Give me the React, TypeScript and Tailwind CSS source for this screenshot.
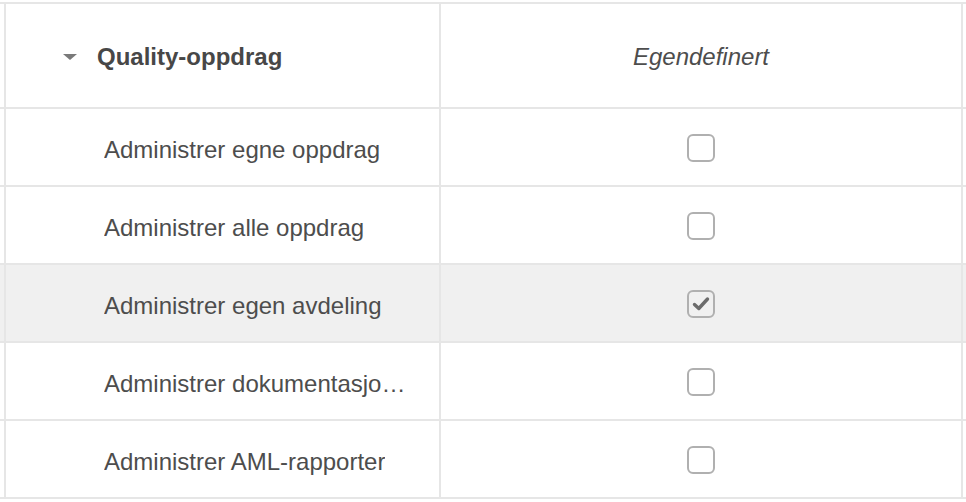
import React from "react";

interface PermissionRow {
  label: string;
  checked: boolean;
  highlighted?: boolean;
}

const rows: PermissionRow[] = [
  { label: "Administrer egne oppdrag", checked: false },
  { label: "Administrer alle oppdrag", checked: false },
  { label: "Administrer egen avdeling", checked: true, highlighted: true },
  { label: "Administrer dokumentasjonskrav", checked: false },
  { label: "Administrer AML-rapporter", checked: false },
];

const Checkbox: React.FC<{ checked: boolean }> = ({ checked }) => (
  <span className="flex h-[28px] w-[28px] items-center justify-center rounded-[6px] border-2 border-[#b0b0b0]">
    {checked && (
      <svg width="18" height="16" viewBox="0 0 18 16" fill="none">
        <path
          d="M2.5 8.5 L6.8 12.5 L15.5 3"
          stroke="#6b6b6b"
          strokeWidth="3.4"
          strokeLinecap="round"
          strokeLinejoin="round"
        />
      </svg>
    )}
  </span>
);

export default function App() {
  return (
    <div
      className="h-[502px] w-[966px] overflow-hidden bg-white pt-[2px] text-[#4d4d4d]"
      style={{ fontFamily: '"Liberation Sans", Arial, sans-serif' }}
    >
      {/* group header */}
      <div className="flex h-[107px] border-y-2 border-[#e6e6e6]">
        <div className="ml-[4px] flex w-[437px] items-center border-x-2 border-[#e6e6e6] pl-[57px] pt-[2px]">
          <svg width="14" height="6" viewBox="0 0 14 6" className="mr-[20px]">
            <path d="M0 0 H14 L7 6 Z" fill="#7a7a7a" />
          </svg>
          <span className="text-[24px] font-bold text-[#474747]">Quality-oppdrag</span>
        </div>
        <div className="flex w-[522px] items-center justify-center border-r-2 border-[#e6e6e6] pt-[2px]">
          <span className="text-[24px] italic">Egendefinert</span>
        </div>
      </div>

      {rows.map((row) => (
        <div
          key={row.label}
          className={`flex h-[78px] border-b-2 border-[#e6e6e6] ${row.highlighted ? "bg-[#f0f0f0]" : ""}`}
        >
          <div className="ml-[4px] flex w-[437px] min-w-0 items-center border-x-2 border-[#e6e6e6] pl-[98px] pr-[30px] pt-[5px]">
            <span className="truncate text-[24px] leading-[30px]">{row.label}</span>
          </div>
          <div className="flex w-[522px] items-center justify-center border-r-2 border-[#e6e6e6] pt-[2px]">
            <Checkbox checked={row.checked} />
          </div>
        </div>
      ))}
    </div>
  );
}
